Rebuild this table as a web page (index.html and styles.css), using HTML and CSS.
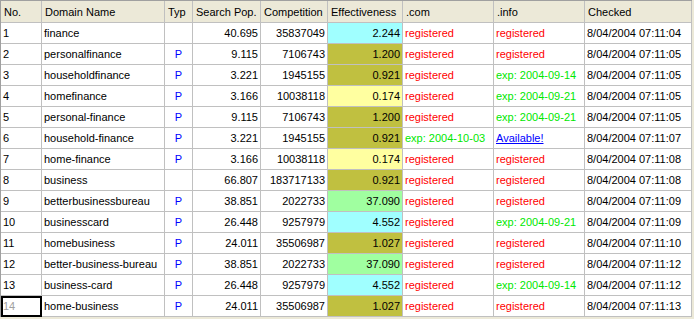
FILE: index.html
```html
<!DOCTYPE html>
<html>
<head>
<meta charset="utf-8">
<link rel="stylesheet" href="styles.css">
</head>
<body>
<table class="grid">
  <colgroup>
    <col class="c-no"><col class="c-dom"><col class="c-typ"><col class="c-pop"><col class="c-comp"><col class="c-eff"><col class="c-com"><col class="c-info"><col class="c-chk">
  </colgroup>
  <thead>
    <tr>
      <th>No.</th><th>Domain Name</th><th>Typ</th><th>Search Pop.</th><th>Competition</th><th>Effectiveness</th><th>.com</th><th>.info</th><th>Checked</th>
    </tr>
  </thead>
  <tbody>
    <tr><td>1</td><td>finance</td><td class="typ"></td><td class="num">40.695</td><td class="num">35837049</td><td class="num eff-cyan">2.244</td><td class="reg">registered</td><td class="reg">registered</td><td>8/04/2004 07:11:04</td></tr>
    <tr><td>2</td><td>personalfinance</td><td class="typ">P</td><td class="num">9.115</td><td class="num">7106743</td><td class="num eff-olive">1.200</td><td class="reg">registered</td><td class="reg">registered</td><td>8/04/2004 07:11:05</td></tr>
    <tr><td>3</td><td>householdfinance</td><td class="typ">P</td><td class="num">3.221</td><td class="num">1945155</td><td class="num eff-olive">0.921</td><td class="reg">registered</td><td class="exp">exp: 2004-09-14</td><td>8/04/2004 07:11:05</td></tr>
    <tr><td>4</td><td>homefinance</td><td class="typ">P</td><td class="num">3.166</td><td class="num">10038118</td><td class="num eff-yellow">0.174</td><td class="reg">registered</td><td class="exp">exp: 2004-09-21</td><td>8/04/2004 07:11:05</td></tr>
    <tr><td>5</td><td>personal-finance</td><td class="typ">P</td><td class="num">9.115</td><td class="num">7106743</td><td class="num eff-olive">1.200</td><td class="reg">registered</td><td class="exp">exp: 2004-09-21</td><td>8/04/2004 07:11:05</td></tr>
    <tr><td>6</td><td>household-finance</td><td class="typ">P</td><td class="num">3.221</td><td class="num">1945155</td><td class="num eff-olive">0.921</td><td class="exp">exp: 2004-10-03</td><td class="avail"><a href="#">Available!</a></td><td>8/04/2004 07:11:07</td></tr>
    <tr><td>7</td><td>home-finance</td><td class="typ">P</td><td class="num">3.166</td><td class="num">10038118</td><td class="num eff-yellow">0.174</td><td class="reg">registered</td><td class="reg">registered</td><td>8/04/2004 07:11:08</td></tr>
    <tr><td>8</td><td>business</td><td class="typ"></td><td class="num">66.807</td><td class="num">183717133</td><td class="num eff-olive">0.921</td><td class="reg">registered</td><td class="reg">registered</td><td>8/04/2004 07:11:08</td></tr>
    <tr><td>9</td><td>betterbusinessbureau</td><td class="typ">P</td><td class="num">38.851</td><td class="num">2022733</td><td class="num eff-green">37.090</td><td class="reg">registered</td><td class="reg">registered</td><td>8/04/2004 07:11:09</td></tr>
    <tr><td>10</td><td>businesscard</td><td class="typ">P</td><td class="num">26.448</td><td class="num">9257979</td><td class="num eff-cyan">4.552</td><td class="reg">registered</td><td class="exp">exp: 2004-09-21</td><td>8/04/2004 07:11:09</td></tr>
    <tr><td>11</td><td>homebusiness</td><td class="typ">P</td><td class="num">24.011</td><td class="num">35506987</td><td class="num eff-olive">1.027</td><td class="reg">registered</td><td class="reg">registered</td><td>8/04/2004 07:11:10</td></tr>
    <tr><td>12</td><td>better-business-bureau</td><td class="typ">P</td><td class="num">38.851</td><td class="num">2022733</td><td class="num eff-green">37.090</td><td class="reg">registered</td><td class="reg">registered</td><td>8/04/2004 07:11:12</td></tr>
    <tr><td>13</td><td>business-card</td><td class="typ">P</td><td class="num">26.448</td><td class="num">9257979</td><td class="num eff-cyan">4.552</td><td class="reg">registered</td><td class="exp">exp: 2004-09-14</td><td>8/04/2004 07:11:12</td></tr>
    <tr><td class="focus">14</td><td>home-business</td><td class="typ">P</td><td class="num">24.011</td><td class="num">35506987</td><td class="num eff-olive">1.027</td><td class="reg">registered</td><td class="reg">registered</td><td>8/04/2004 07:11:13</td></tr>
  </tbody>
</table>
</body>
</html>
```

FILE: styles.css
```css
html, body {
  margin: 0;
  padding: 0;
  background: #ECE9D8;
}

.grid {
  border-collapse: separate;
  border-spacing: 0;
  table-layout: fixed;
  width: 692px;
  border-top: 1px solid #A0A0A0;
  border-left: 1px solid #A0A0A0;
  font-family: "Liberation Sans", Arial, sans-serif;
  font-size: 11px;
  color: #000;
}

.c-no { width: 41px; }
.c-dom { width: 123px; }
.c-typ { width: 28px; }
.c-pop { width: 68px; }
.c-comp { width: 67px; }
.c-eff { width: 75px; }
.c-com { width: 91px; }
.c-info { width: 91px; }
.c-chk { width: 107px; }

.grid th,
.grid td {
  box-sizing: border-box;
  border-right: 1px solid #C0C0C0;
  border-bottom: 1px solid #C0C0C0;
  padding: 0 2px;
  white-space: nowrap;
  overflow: hidden;
  text-align: left;
  vertical-align: middle;
}

.grid th {
  height: 22px;
  line-height: 21px;
  padding-top: 1px;
  line-height: 20px;
  font-weight: normal;
  background: #ECE9D8;
  padding-left: 3px;
}

.grid td {
  height: 21px;
  line-height: 20px;
  background: #FFFFFF;
}

.grid td.num { text-align: right; }
.grid td.typ { text-align: center; color: #0000FF; }
.grid td.reg { color: #FF0000; }
.grid td.exp { color: #00E800; }
.grid td.avail a { color: #0000FF; text-decoration: underline; }

.grid td.eff-cyan { background: #A0FFFF; }
.grid td.eff-olive { background: #C0C040; }
.grid td.eff-yellow { background: #FFFFA0; }
.grid td.eff-green { background: #A0FFA0; }

.grid td.focus {
  color: #A0A0A0;
  outline: 2px solid #000;
  outline-offset: -2px;
}
```
